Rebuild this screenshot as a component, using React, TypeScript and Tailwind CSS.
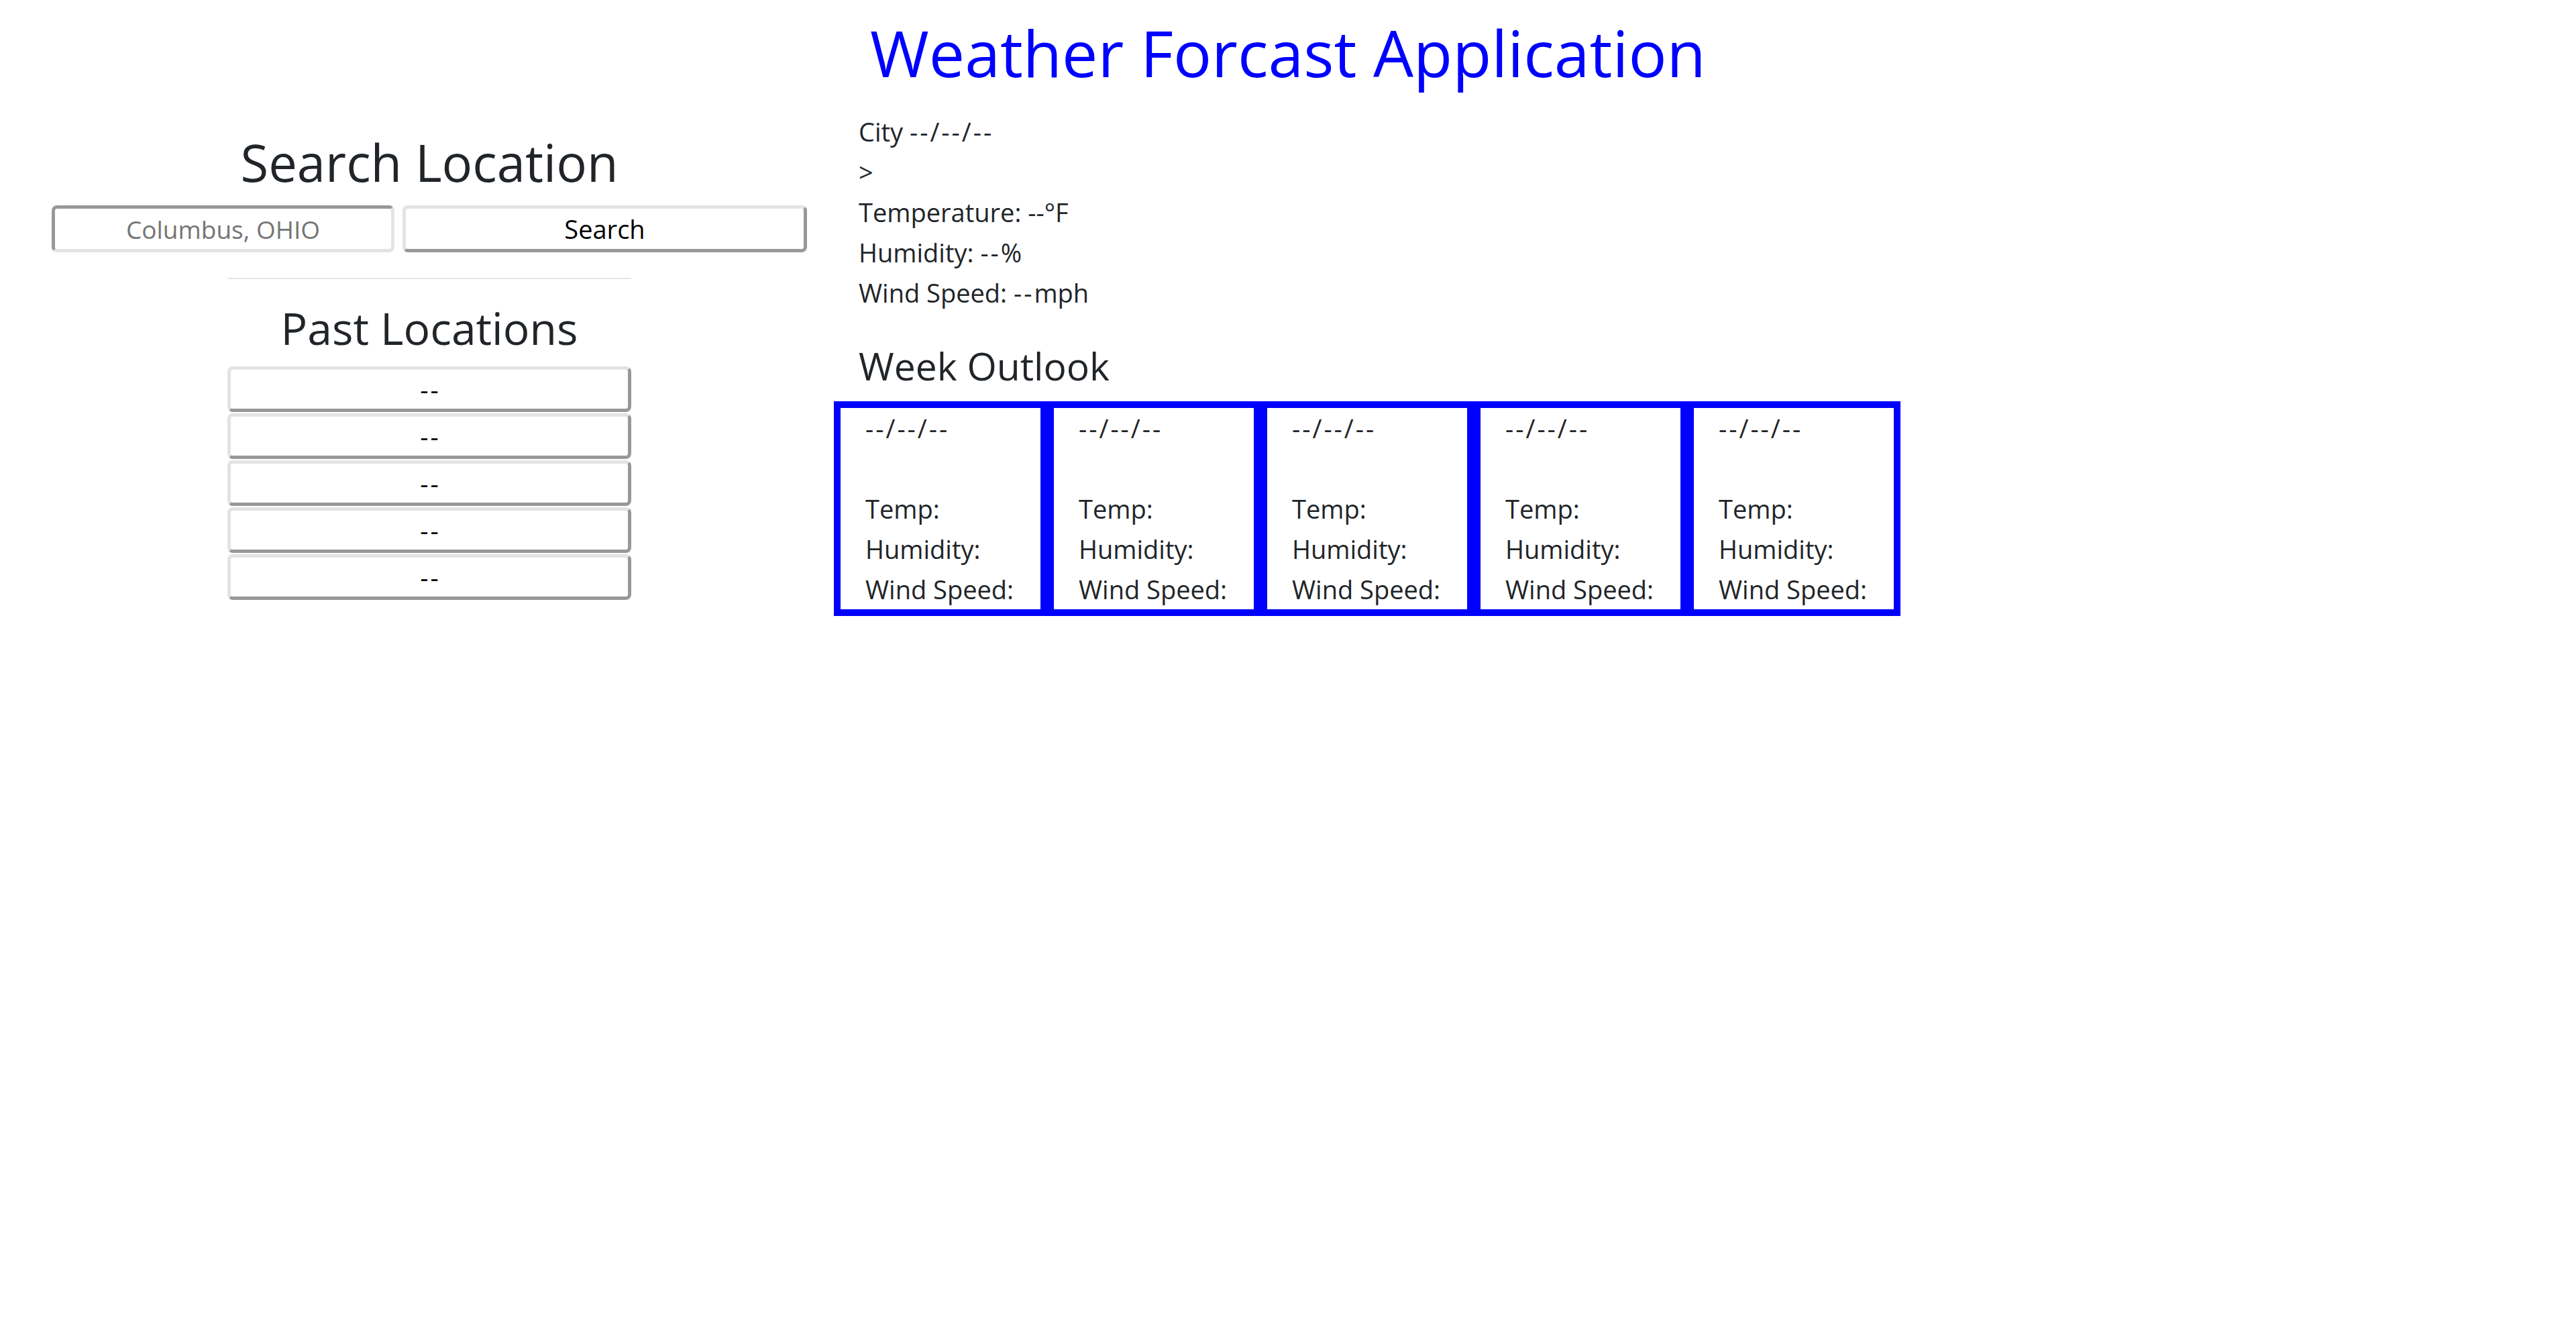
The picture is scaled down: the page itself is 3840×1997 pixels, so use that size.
import React from "react";

const days = [0, 1, 2, 3, 4];
const past = [0, 1, 2, 3, 4];

function Dash({ children }: { children: React.ReactNode }) {
  return <span className="tracking-[3px]">{children}</span>;
}

export default function App() {
  return (
    <div className="min-h-screen w-full bg-white text-[#212529] font-['Open_Sans','Noto_Sans',sans-serif]">
      <h1 className="pt-[18px] text-center text-[95px] leading-[120px] font-normal text-[#0000ff]">
        Weather Forcast Application
      </h1>
      <div className="flex">
        <div className="flex w-[1280px] shrink-0 flex-col items-center px-[37.5px] pt-[55.5px]">
          <h2 className="text-center text-[76px] leading-[96px] font-normal">Search Location</h2>
          <div className="mt-[16.5px] flex items-center gap-[12px]">
            <input
              type="text"
              placeholder="Columbus, OHIO"
              className="h-[70px] w-[511px] rounded-[8px] border-[5px] border-t-[#989898] border-l-[#989898] border-r-[#e3e3e3] border-b-[#e3e3e3] bg-white text-center text-[37px] text-black outline-none placeholder:text-[#757575]"
            />
            <button
              type="button"
              className="flex h-[70px] w-[603px] items-center justify-center rounded-[8px] border-[5px] border-t-[#e3e3e3] border-l-[#e3e3e3] border-r-[#989898] border-b-[#989898] bg-white text-[38px] text-black"
            >
              Search
            </button>
          </div>
          <div className="mt-[37.5px] h-[2.5px] w-[602px] bg-[#e6e6e6]" />
          <h3 className="mt-[29.5px] text-center text-[66px] leading-[84px] font-normal">Past Locations</h3>
          <div className="mt-[16.5px] flex flex-col items-center gap-[2.5px]">
            {past.map((p) => (
              <button
                key={p}
                type="button"
                className="flex h-[67.5px] w-[602px] items-center justify-center rounded-[8px] border-[5px] border-t-[#e3e3e3] border-l-[#e3e3e3] border-r-[#989898] border-b-[#989898] bg-white text-[38px] leading-[60px] text-black"
              >
                <span className="tracking-[3px] pl-[3px]">--</span>
              </button>
            ))}
          </div>
        </div>
        <div className="flex-1 pt-[28px]">
          <div className="text-[38px] leading-[60px]">
            <div>
              City <Dash>--/--/--</Dash>
            </div>
            <div>&gt;</div>
            <div>Temperature: --°F</div>
            <div>
              Humidity: <Dash>--</Dash>%
            </div>
            <div>
              Wind Speed: <Dash>--</Dash>mph
            </div>
          </div>
          <h4 className="mt-[42.5px] text-[57px] leading-[72px] font-normal">Week Outlook</h4>
          <div className="mt-[17px] -ml-[37.5px] flex">
            {days.map((d) => (
              <div
                key={d}
                className="w-[318px] shrink-0 border-[10px] border-[#0000ff] pl-[37.5px] text-[38px] leading-[60px]"
              >
                <div>
                  <Dash>--/--/--</Dash>
                </div>
                <div>&nbsp;</div>
                <div>Temp:</div>
                <div>Humidity:</div>
                <div>Wind Speed:</div>
              </div>
            ))}
          </div>
        </div>
      </div>
    </div>
  );
}
